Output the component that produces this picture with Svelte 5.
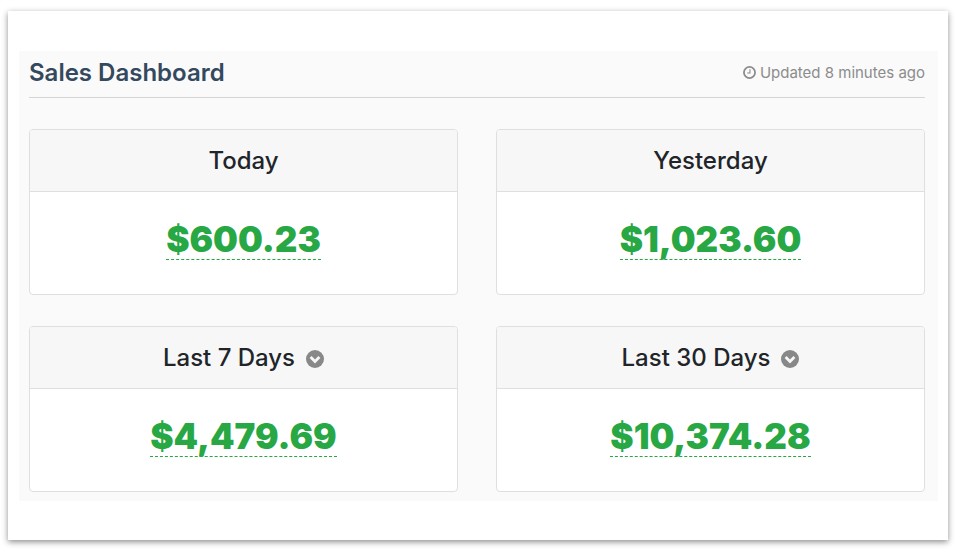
<script>
  export let updated = "Updated 8 minutes ago";

  export let cards = [
    { title: "Today", amount: "$600.23", menu: false },
    { title: "Yesterday", amount: "$1,023.60", menu: false },
    { title: "Last 7 Days", amount: "$4,479.69", menu: true },
    { title: "Last 30 Days", amount: "$10,374.28", menu: true },
  ];
</script>

<style>
  :global(body) {
    background: white;
    font-family: Inter, "Liberation Sans", sans-serif;
  }

  .page {
    padding: 11px 7px 10px 8px;
  }

  .window {
    padding: 40px 10px 39px 11px;
    background: white;
    box-shadow: 0 2px 6px rgba(0, 0, 0, 0.45);
  }

  .dashboard {
    background: #fafafa;
    padding: 0 13px 9px 10px;
  }

  .header {
    display: flex;
    align-items: center;
    justify-content: space-between;
    height: 46px;
    border-bottom: 1px solid #d5d5d3;
    margin-bottom: 31px;
  }

  .header--title,
  .header--updated {
    padding-bottom: 3px;
  }

  .header--title {
    margin: 0;
    color: #34495e;
    font-size: 24px;
    font-weight: 600;
    line-height: 28px;
  }

  .header--updated {
    display: flex;
    align-items: center;
    gap: 4px;
    color: #8c8c8c;
    font-size: 15px;
  }

  .cards {
    display: grid;
    grid-template-columns: 1fr 1fr;
    gap: 31px 38px;
  }

  .card {
    background: white;
    border: 1px solid #dfdfdf;
    border-radius: 4px;
    overflow: hidden;
  }

  .card--header {
    display: flex;
    align-items: center;
    justify-content: center;
    gap: 11px;
    height: 61px;
    background: #f7f7f7;
    border-bottom: 1px solid #dfdfdf;
  }

  .card--title {
    margin: 0;
    color: #212529;
    font-size: 24px;
    font-weight: 500;
  }

  .card--menu {
    display: flex;
    padding: 3px 0 0;
    border: 0;
    background: none;
    cursor: pointer;
  }

  .card--body {
    display: flex;
    justify-content: center;
    padding: 27px 0 34px;
  }

  .card--amount {
    color: #28a745;
    border-bottom: 1px dashed #28a745;
    font-size: 35px;
    font-weight: 900;
    line-height: 40px;
    text-decoration: none;
  }
</style>

<div class="page">
  <main class="window">
    <section class="dashboard">
      <header class="header">
        <h1 class="header--title">Sales Dashboard</h1>
        <span class="header--updated">
          <svg width="13" height="13" viewBox="0 0 14 14" fill="none" stroke="#8c8c8c" stroke-width="1.9" aria-hidden="true">
            <circle cx="7" cy="7" r="6" />
            <path d="M7.5 3.5V7.5H4.5" stroke-width="1.2" />
          </svg>
          {updated}
        </span>
      </header>
      <div class="cards">
        {#each cards as card}
          <article class="card">
            <div class="card--header">
              <h2 class="card--title">{card.title}</h2>
              {#if card.menu}
                <button class="card--menu" type="button" aria-label="Show {card.title} details">
                  <svg width="18" height="18" viewBox="0 0 18 18" aria-hidden="true">
                    <circle cx="9" cy="9" r="9" fill="#888" />
                    <path d="M4.6 7L9 11.4L13.4 7" fill="none" stroke="#f7f7f7" stroke-width="2.8" />
                  </svg>
                </button>
              {/if}
            </div>
            <div class="card--body">
              <a class="card--amount" href="#sales">{card.amount}</a>
            </div>
          </article>
        {/each}
      </div>
    </section>
  </main>
</div>
